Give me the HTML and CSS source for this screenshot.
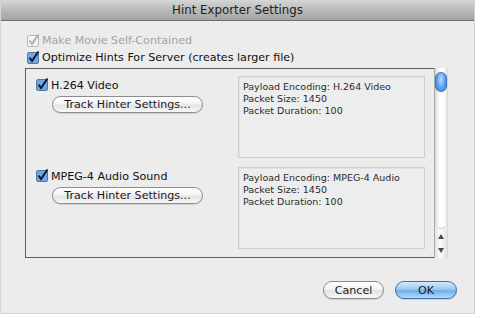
FILE: index.html
```html
<!DOCTYPE html>
<html lang="en">

<head>
  <meta charset="UTF-8">
  <title>Hint Exporter Settings</title>
  <link rel="stylesheet" href="styles.css">
</head>

<body>
  <div class="window">

    <header class="titlebar">Hint Exporter Settings</header>

    <div class="sheet">
      <label class="check disabled">
        <svg class="box" width="14" height="14" viewBox="0 0 14 14"><rect x="0.5" y="1.5" width="11" height="11" rx="1.5"/><path d="M2.5 6.5 L5 10 L11.5 0.5"/></svg>
        Make Movie Self-Contained
      </label>
      <label class="check">
        <svg class="box" width="14" height="14" viewBox="0 0 14 14"><rect x="0.5" y="1.5" width="11" height="11" rx="1.5"/><path d="M2.5 6.5 L5 10 L11.5 0.5"/></svg>
        Optimize Hints For Server (creates larger file)
      </label>

      <div class="frame">
        <div class="tracks">

          <section class="track">
            <div class="track-left">
              <label class="check">
                <svg class="box" width="14" height="14" viewBox="0 0 14 14"><rect x="0.5" y="1.5" width="11" height="11" rx="1.5"/><path d="M2.5 6.5 L5 10 L11.5 0.5"/></svg>
                H.264 Video
              </label>
              <button class="pill hinter">Track Hinter Settings...</button>
            </div>
            <div class="info">
              Payload Encoding: H.264 Video<br>
              Packet Size: 1450<br>
              Packet Duration: 100
            </div>
          </section>

          <section class="track">
            <div class="track-left">
              <label class="check">
                <svg class="box" width="14" height="14" viewBox="0 0 14 14"><rect x="0.5" y="1.5" width="11" height="11" rx="1.5"/><path d="M2.5 6.5 L5 10 L11.5 0.5"/></svg>
                MPEG-4 Audio Sound
              </label>
              <button class="pill hinter">Track Hinter Settings...</button>
            </div>
            <div class="info">
              Payload Encoding: MPEG-4 Audio<br>
              Packet Size: 1450<br>
              Packet Duration: 100
            </div>
          </section>

        </div>

        <div class="scrollbar">
          <div class="track-bar">
            <div class="thumb"></div>
          </div>
          <div class="arrow up"></div>
          <div class="arrow down"></div>
        </div>
      </div>

      <footer class="actions">
        <button class="pill cancel">Cancel</button>
        <button class="pill ok">OK</button>
      </footer>
    </div>

  </div>
</body>

</html>
```

FILE: styles.css
```css
* {
  box-sizing: border-box;
}

body {
  margin: 0;
  background: #fff;
  font-family: 'DejaVu Sans', Verdana, sans-serif;
  font-size: 11.1px;
  color: #111;
}

.window {
  width: 475px;
  height: 314px;
  background: #ececec;
  border-left: 1px solid #d6d6d6;
  border-right: 1px solid #d0d0d0;
  border-bottom: 1px solid #d6d6d6;
}

.titlebar {
  height: 21px;
  line-height: 20px;
  text-align: center;
  color: #222;
  font-size: 11.8px;
  background: linear-gradient(#d6d6d6, #b9b9b9 50%, #a4a4a4);
  border-bottom: 1px solid #6e6e6e;
}

.sheet {
  padding-top: 11px;
}

/* checkboxes */

.check {
  display: flex;
  align-items: center;
  height: 17px;
  padding-left: 26px;
  gap: 1px;
}

.box {
  flex: none;
}

.box rect {
  fill: #6fa8e4;
  stroke: #4f79a8;
  stroke-width: 1;
}

.box path {
  fill: none;
  stroke: #151a22;
  stroke-width: 2;
}

.check.disabled {
  color: #a3a3a3;
}

.check.disabled .box rect {
  fill: #f4f4f4;
  stroke: #b8b8b8;
}

.check.disabled .box path {
  stroke: #b0b0b0;
}

/* the framed list of tracks */

.frame {
  display: flex;
  width: 423px;
  height: 190px;
  margin: 2px 0 0 24px;
}

.tracks {
  flex: 1;
  border-top: 1px solid #5c5c5c;
  border-left: 1px solid #5c5c5c;
  border-bottom: 1px solid #5c5c5c;
  padding-top: 7px;
}

.track {
  display: flex;
  justify-content: space-between;
  height: 82px;
  margin-bottom: 9px;
}

.track-left {
  padding: 2px 0 0 10px;
}

.track-left .check {
  padding-left: 0;
  height: 14px;
}

.info {
  width: 187px;
  height: 82px;
  margin-right: 9px;
  padding: 4px 4px;
  font-size: 9.5px;
  line-height: 12px;
  color: #2a2a2a;
  background: #ededed;
  border: 1px solid #cfcfcf;
  box-shadow: inset 1px 1px 0 #e2e2e2;
}

/* aqua buttons */

.pill {
  font-family: inherit;
  font-size: 11.1px;
  color: #1a1a1a;
  height: 17px;
  padding: 0;
  border: 1px solid #8c8c8c;
  border-radius: 9px;
  background: linear-gradient(#ffffff, #f3f3f3 45%, #e4e4e4 55%, #f8f8f8);
  box-shadow: 0 1px 1px rgba(0, 0, 0, 0.12);
}

.hinter {
  width: 151px;
  margin: 4px 0 0 16px;
}

/* scrollbar */

.scrollbar {
  width: 14px;
  display: flex;
  flex-direction: column;
  border-left: 1px solid #a8a8a8;
  border-right: 1px solid #d8d8d8;
  background: #f2f2f2;
}

.track-bar {
  flex: 1;
  padding-top: 4px;
  border-radius: 0 0 7px 7px;
  background: linear-gradient(to right, #d4d4d4, #fafafa 30%, #ffffff 70%, #e6e6e6);
  border-bottom: 1px solid #cfcfcf;
}

.thumb {
  width: 12px;
  height: 20px;
  border-radius: 6px;
  border: 1px solid #3b74c0;
  background: radial-gradient(ellipse at 50% 35%, #b8dcff, #5aa2ee 55%, #2f74cf);
}

.arrow {
  height: 14px;
  position: relative;
  background: linear-gradient(to right, #e2e2e2, #fafafa 40%, #f6f6f6 60%, #e0e0e0);
}

.arrow::after {
  content: "";
  position: absolute;
  left: 3px;
  top: 5px;
  border-left: 3px solid transparent;
  border-right: 3px solid transparent;
}

.arrow.up::after {
  border-bottom: 5px solid #4a4a4a;
}

.arrow.down::after {
  border-top: 5px solid #4a4a4a;
}

.arrow.down {
  height: 15px;
}

/* dialog buttons */

.actions {
  display: flex;
  justify-content: flex-end;
  gap: 11px;
  margin-top: 23px;
  padding-right: 17px;
}

.cancel {
  width: 61px;
  height: 18px;
}

.ok {
  width: 62px;
  height: 18px;
  border-color: #3f6fa6;
  background: linear-gradient(#d5eafc, #9bcaf3 45%, #6eaeea 55%, #b2dcfb);
}
```
